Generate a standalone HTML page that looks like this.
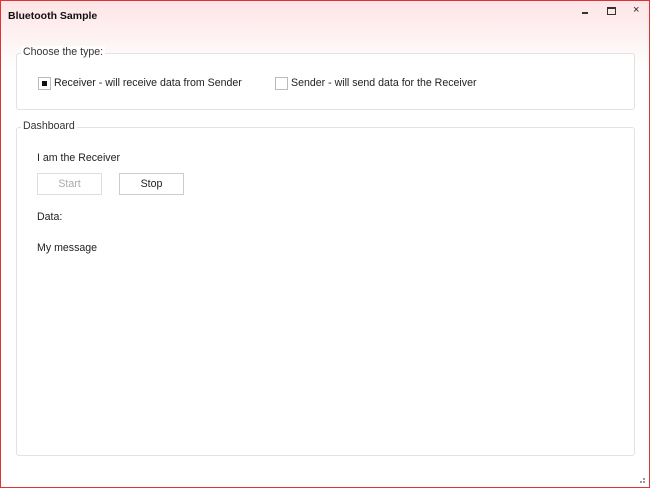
<!DOCTYPE html>
<html><head><style>
body{margin:0;width:650px;height:488px;overflow:hidden;font-family:"Liberation Sans",sans-serif;font-size:10.6px;color:#222}
.win{position:absolute;left:0;top:0;width:648px;height:486px;border:1px solid #d33;background:linear-gradient(#fde4e6 0px,#fff 70px,#fff)}
.title{position:absolute;left:7px;top:9px;font-weight:bold;font-size:10.5px;color:#111}
.gb{position:absolute;border:1px solid #e2e2e2;border-radius:3px;background:#fff}
.lg{position:absolute;top:-8px;left:4px;background:#fff;padding:0 2px;color:#333}
.cb{position:absolute;width:11px;height:11px;border:1px solid #bbb;background:#fff}
.btn{position:absolute;height:20px;border:1px solid #ccc;text-align:center;line-height:20px;background:#fff}
.t{position:absolute}
</style></head><body>
<div class="win">
<div class="title">Bluetooth Sample</div>
<div style="position:absolute;left:581px;top:11px;width:6px;height:2px;background:#333"></div>
<div style="position:absolute;left:606px;top:6px;width:7px;height:5px;border:1px solid #333;border-top-width:2px"></div>
<div class="t" style="left:632px;top:3px;font-size:11px">&#215;</div>
<div class="gb" style="left:15px;top:52px;width:617px;height:55px">
 <div class="lg">Choose the type:</div>
 <div class="cb" style="left:21px;top:23px"><div style="position:absolute;left:3px;top:3px;width:5px;height:5px;background:#111"></div></div>
 <div class="t" style="left:37px;top:23px">Receiver - will receive data from Sender</div>
 <div class="cb" style="left:258px;top:23px"></div>
 <div class="t" style="left:274px;top:23px">Sender - will send data for the Receiver</div>
</div>
<div class="gb" style="left:15px;top:126px;width:617px;height:327px">
 <div class="lg">Dashboard</div>
 <div class="t" style="left:20px;top:24px">I am the Receiver</div>
 <div class="btn" style="left:20px;top:45px;width:63px;color:#aaa;border-color:#ddd">Start</div>
 <div class="btn" style="left:102px;top:45px;width:63px">Stop</div>
 <div class="t" style="left:20px;top:83px">Data:</div>
 <div class="t" style="left:20px;top:114px">My message</div>
</div>
<div style="position:absolute;left:642px;top:477px;width:2px;height:2px;background:#999"></div>
<div style="position:absolute;left:639px;top:480px;width:2px;height:2px;background:#999"></div>
<div style="position:absolute;left:642px;top:480px;width:2px;height:2px;background:#999"></div>
</div>
</body></html>
